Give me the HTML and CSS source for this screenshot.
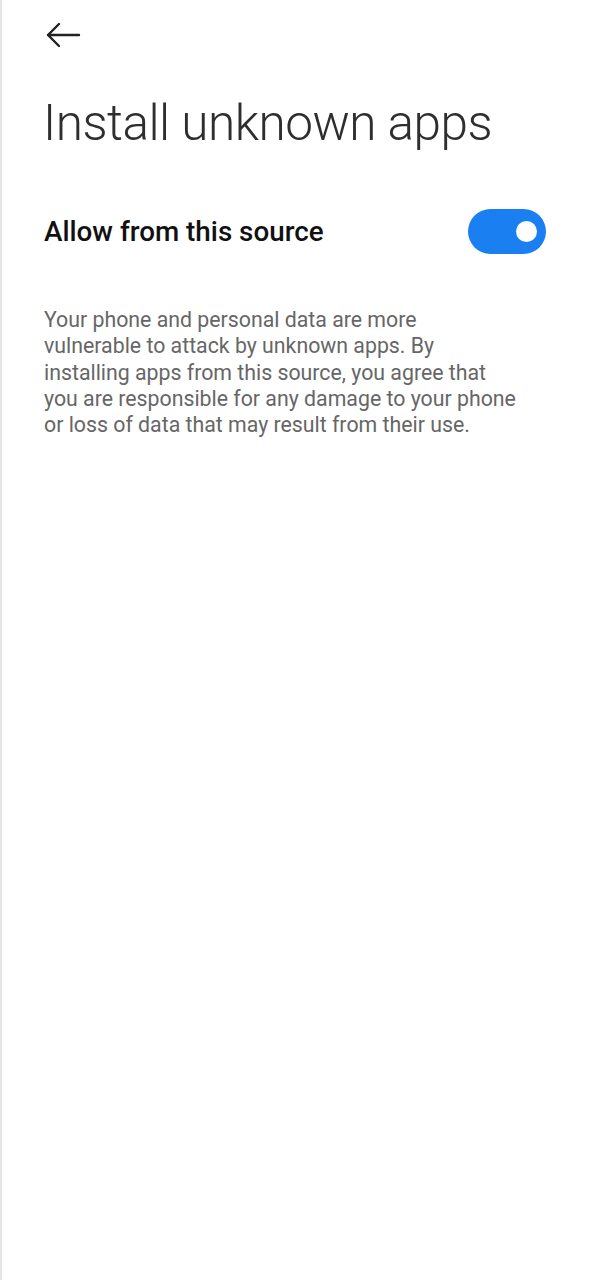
FILE: index.html
```html
<!DOCTYPE html>
<html>
<head>
<meta charset="utf-8">
<link rel="stylesheet" href="styles.css">
</head>
<body>
<div class="screen">
  <div class="topbar">
    <svg class="back" width="36" height="28" viewBox="0 0 36 28">
      <path d="M34 14H3M14 3L3 14L14 25" fill="none" stroke="#222" stroke-width="2.4" stroke-linecap="round" stroke-linejoin="round"/>
    </svg>
  </div>
  <h1 class="title">Install unknown apps</h1>
  <div class="row">
    <span class="row-label">Allow from this source</span>
    <div class="toggle"><div class="knob"></div></div>
  </div>
  <p class="desc">Your phone and personal data are more<br>vulnerable to attack by unknown apps. By<br>installing apps from this source, you agree that<br>you are responsible for any damage to your phone<br>or loss of data that may result from their use.</p>
</div>
</body>
</html>
```
FILE: styles.css
```css
html, body {
  margin: 0;
  padding: 0;
  background: #ffffff;
}
.screen {
  width: 591px;
  height: 1280px;
  box-sizing: border-box;
  border-left: 2px solid #e6e6e6;
  padding: 0 44px 0 41px;
  font-family: Roboto, "Noto Sans", sans-serif;
}
.topbar {
  height: 70px;
  display: flex;
  align-items: center;
}
.back {
  display: block;
  margin-left: 2px;
}
.title {
  margin: 18px 0 0 0;
  font-weight: 300;
  font-size: 49.5px;
  letter-spacing: -0.5px;
  line-height: 70px;
  color: #2e2e2e;
}
.row {
  margin-top: 50px;
  height: 46px;
  display: flex;
  align-items: center;
  justify-content: space-between;
}
.row-label {
  font-size: 27.8px;
  font-weight: 500;
  color: #111;
  margin-left: 1px;
}
.toggle {
  width: 78px;
  height: 45px;
  border-radius: 23px;
  background: #1a7ff0;
  position: relative;
  margin-right: 1px;
}
.knob {
  position: absolute;
  width: 21px;
  height: 21px;
  border-radius: 50%;
  background: #fff;
  right: 9px;
  top: 12px;
}
.desc {
  margin: 53px 0 0 1px;
  font-size: 21.3px;
  line-height: 26.3px;
  color: #666;
  white-space: nowrap;
}
```
